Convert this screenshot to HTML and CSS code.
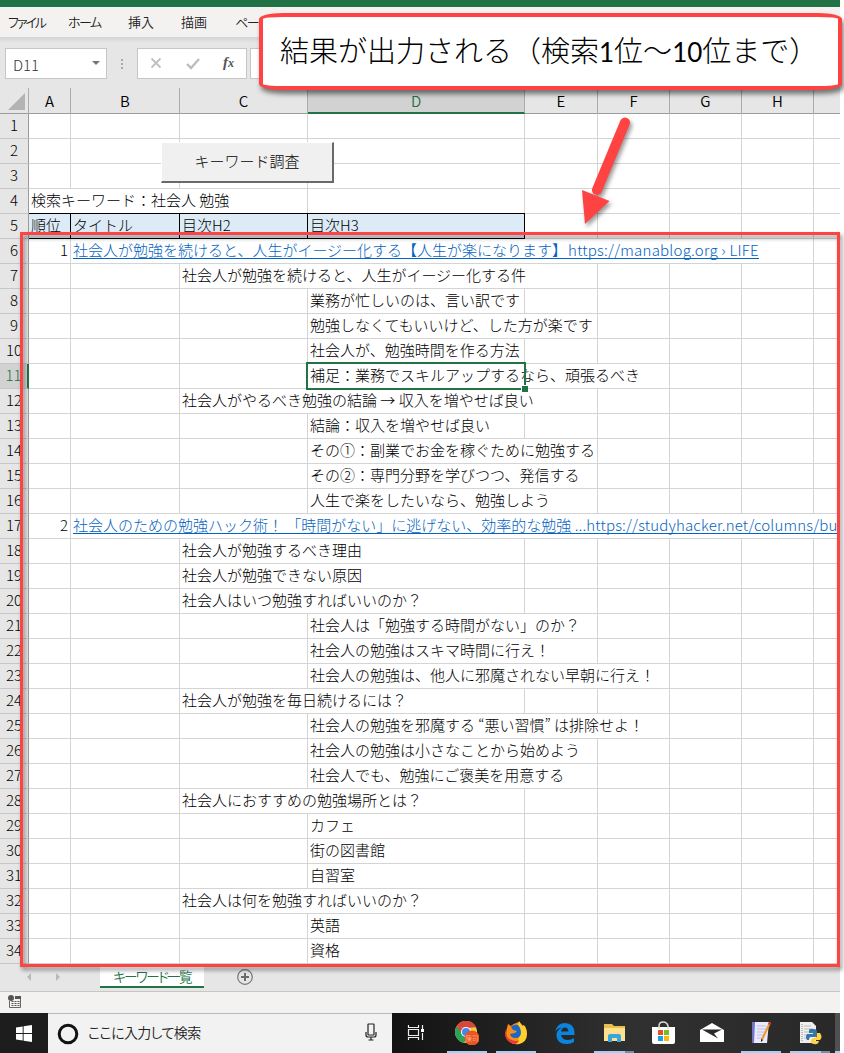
FILE: index.html
```html
<!DOCTYPE html>
<html lang="ja">
<head>
<meta charset="utf-8">
<title>キーワード一覧</title>
<link rel="stylesheet" href="styles.css">
</head>
<body>
<div class="window">
  <div class="titlebar"></div>
  <nav class="ribbon"><span class="kana file">ファイル</span><span class="kana home">ホーム</span><span class="insert">挿入</span><span class="draw">描画</span><span class="kana page">ページ</span></nav>
  <div class="formula">
    <div class="namebox"><span>D11</span><i class="caret"></i></div>
    <div class="dots"><i></i><i></i><i></i></div>
    <div class="fxbox">
      <svg class="fxicons" width="108" height="29" viewBox="0 0 108 29"><path d="M13.500 9.500l9 9M22.500 9.500l-9 9" stroke="#c0c0c0" stroke-width="1.800"/><path d="M49 15l4 4 8-9" fill="none" stroke="#bdbdbd" stroke-width="2.4"/></svg>
      <span class="fx">f<small>x</small></span>
    </div>
    <div class="input"></div>
  </div>
  <div class="cols"><span class="corner"><i></i></span><span>A</span><span>B</span><span>C</span><span class="on">D</span><span>E</span><span>F</span><span>G</span><span>H</span><span></span></div>
  <div class="sheet">
    <div class="row"><b>1</b></div>
    <div class="row"><b>2</b></div>
    <div class="row"><b>3</b></div>
    <div class="row"><b>4</b><span class="a to-c">検索キーワード：社会人 勉強</span></div>
    <div class="row head"><b>5</b><span class="a">順位</span><span class="bb">タイトル</span><span class="c">目次H2</span><span class="d">目次H3</span></div>
    <div class="row"><b>6</b><span class="a num">1</span><span class="bb to-h link"><u>社会人が勉強を続けると、人生がイージー化する【人生が楽になります】<span class="url1">https://manablog.org › LIFE</span></u></span></div>
    <div class="row"><b>7</b><span class="c to-e">社会人が勉強を続けると、人生がイージー化する件</span></div>
    <div class="row"><b>8</b><span class="d">業務が忙しいのは、言い訳です</span></div>
    <div class="row"><b>9</b><span class="d to-e">勉強しなくてもいいけど、した方が楽です</span></div>
    <div class="row"><b>10</b><span class="d">社会人が、勉強時間を作る方法</span></div>
    <div class="row"><b class="on">11</b><span class="d to-f">補足：業務でスキルアップするなら、頑張るべき</span><i class="cursor"></i></div>
    <div class="row"><b>12</b><span class="c to-e">社会人がやるべき勉強の結論 → 収入を増やせば良い</span></div>
    <div class="row"><b>13</b><span class="d">結論：収入を増やせば良い</span></div>
    <div class="row"><b>14</b><span class="d to-e">その①：副業でお金を稼ぐために勉強する</span></div>
    <div class="row"><b>15</b><span class="d to-e">その②：専門分野を学びつつ、発信する</span></div>
    <div class="row"><b>16</b><span class="d to-e">人生で楽をしたいなら、勉強しよう</span></div>
    <div class="row"><b>17</b><span class="a num">2</span><span class="bb to-i link"><u>社会人のための勉強ハック術！ 「時間がない」に逃げない、効率的な勉強 <span class="url2">...https://studyhacker.net/columns/bu</span></u></span></div>
    <div class="row"><b>18</b><span class="c to-d">社会人が勉強するべき理由</span></div>
    <div class="row"><b>19</b><span class="c to-d">社会人が勉強できない原因</span></div>
    <div class="row"><b>20</b><span class="c to-d">社会人はいつ勉強すればいいのか？</span></div>
    <div class="row"><b>21</b><span class="d to-e">社会人は「勉強する時間がない」のか？</span></div>
    <div class="row"><b>22</b><span class="d to-e">社会人の勉強はスキマ時間に行え！</span></div>
    <div class="row"><b>23</b><span class="d to-f">社会人の勉強は、他人に邪魔されない早朝に行え！</span></div>
    <div class="row"><b>24</b><span class="c to-d">社会人が勉強を毎日続けるには？</span></div>
    <div class="row"><b>25</b><span class="d to-f">社会人の勉強を邪魔する “悪い習慣” は排除せよ！</span></div>
    <div class="row"><b>26</b><span class="d to-e">社会人の勉強は小さなことから始めよう</span></div>
    <div class="row"><b>27</b><span class="d to-e">社会人でも、勉強にご褒美を用意する</span></div>
    <div class="row"><b>28</b><span class="c to-d">社会人におすすめの勉強場所とは？</span></div>
    <div class="row"><b>29</b><span class="d">カフェ</span></div>
    <div class="row"><b>30</b><span class="d">街の図書館</span></div>
    <div class="row"><b>31</b><span class="d">自習室</span></div>
    <div class="row"><b>32</b><span class="c to-d">社会人は何を勉強すればいいのか？</span></div>
    <div class="row"><b>33</b><span class="d">英語</span></div>
    <div class="row"><b>34</b><span class="d">資格</span></div>
    <button class="run">キーワード調査</button>
  </div>
  <div class="tabs">
    <svg width="100" height="27" viewBox="0 0 100 27"><path d="M31 9v8l-4-4zM56 9v8l4-4z" fill="#b9b9b9"/></svg>
    <span class="tab">キーワード一覧</span>
    <svg class="plus" width="18" height="18" viewBox="0 0 18 18"><circle cx="9" cy="9" r="7.3" fill="none" stroke="#777" stroke-width="1.2"/><path d="M9 5v8M5 9h8" stroke="#6c6c6c" stroke-width="2"/></svg>
  </div>
  <div class="status">
    <svg width="14" height="14" viewBox="0 0 14 14"><path d="M1.500 6v6.500h11V2" fill="none" stroke="#666"/><path d="M7 1h6v3H7z" fill="#555"/><circle cx="3" cy="3" r="3" fill="#555"/><path d="M3.500 6.500h8M3.500 8.500h8M3.500 10.500h8" stroke="#555" stroke-dasharray="2 1"/></svg>
  </div>
  <div class="taskbar">
    <div class="start"><svg width="16" height="17" viewBox="0 0 16 17"><path d="M0 2.4L6.7 1.4V8H0zM7.6 1.3L16 0v8H7.6zM0 9h6.7v6.6L0 14.6zM7.6 9H16v8l-8.4-1.2z" fill="#fff"/></svg></div>
    <div class="search">
      <svg width="22" height="22" viewBox="0 0 22 22"><circle cx="11" cy="11" r="8.8" fill="none" stroke="#111" stroke-width="3"/></svg>
      <span>ここに入力して検索</span>
      <svg class="mic" width="12" height="18" viewBox="0 0 12 18"><rect x="3" y="1" width="6" height="11" rx="0.500" fill="none" stroke="#222" stroke-width="1.2"/><path d="M1 9v3q0 2 2 2h6q2 0 2-2V9M6 14v3M3.500 17h5" fill="none" stroke="#222" stroke-width="1.2"/></svg>
    </div>
    <div class="apps">
      <div class="app view"><svg viewBox="0 0 24 24"><path d="M4.500 4v2.500h10V4M4.500 19v-2.500h10V19M4.500 8.500h10v6h-10zM18.500 4v4M18.500 12v7" fill="none" stroke="#eee" stroke-width="1.200"/><path d="M17 8h3v3h-3z" fill="#fff"/></svg></div>
      <div class="app open"><svg viewBox="0 0 24 24"><circle cx="11" cy="11" r="11" fill="#f6c945"/><path d="M11 11L1.500 5.500A11 11 0 0 0 9 21.800L15 13z" fill="#2aa35a"/><path d="M1.500 5.500A11 11 0 0 1 21 6.200L11 7z" fill="#d9463b"/><path d="M1.500 5.500L7 12l4-5z" fill="#d9463b"/><circle cx="11" cy="11" r="5" fill="#fff"/><circle cx="11" cy="11" r="4" fill="#4587ef"/><circle cx="17" cy="17" r="7.500" fill="#ec5420"/><text x="17" y="19.500" text-anchor="middle" font-size="6.500" fill="#ffd2bb">陳司</text></svg></div>
      <div class="app open"><svg viewBox="0 0 24 24"><path d="M3 7l1-4 3 2q2-2 5-3l3-1q3 2 4 4l2 0q3 6 1 11-3 7-9 7-8 0-10.500-7-1-5 .5-9z" fill="#ff8a18"/><path d="M15 0q2 3 3 5l2-1q3 4 3 9 0 8-8 10-5 1-9-2 7 1 9-4 2-4-1-9-1-4 1-8z" fill="#ffd02b"/><path d="M7 6q3-3 7-2 3 3 3 7 0 6-6 6-4 0-5-4l5-1 2-2-4-1z" fill="#1769c8"/><path d="M2 8q-1 9 6 11 4 2 7 0-1 4-5 4Q2 21 1 14q0-4 1-6z" fill="#ec3a35"/></svg></div>
      <div class="app"><svg viewBox="0 0 24 24"><path d="M2 11Q4 2 12 2q9 0 9.500 10v2H8q1 5 7 5 3 0 6-2v4q-3 2-7 2Q3 23 3.500 13 4 9 9 6.500 4 7 2 11zM8 10.500h7.500Q15 6.500 12 6.500T8 10.500z" fill="#0b84de"/></svg></div>
      <div class="app open split"><svg viewBox="0 0 24 24"><path d="M2 3h8l2 2h11v15H2z" fill="#e8bd52"/><path d="M2 7h21v13H2z" fill="#ffe08d"/><path d="M6 21v-6q0-2 2-2h9q2 0 2 2v6h-4v-4h-5v4z" fill="#36a6de"/></svg></div>
      <div class="app"><svg viewBox="0 0 24 24"><path d="M1 6h23v15q0 2-2 2H3q-2 0-2-2z" fill="#fff"/><path d="M8 8V5q0-4 4-4t5 4v3" fill="none" stroke="#ddd" stroke-width="1.500"/><path d="M7 9h5v5H7z" fill="#e94f25"/><path d="M13 9h5v5h-5z" fill="#7aba23"/><path d="M7 15h5v5H7z" fill="#14a2ea"/><path d="M13 15h5v5h-5z" fill="#fbb813"/></svg></div>
      <div class="app"><svg viewBox="0 0 24 24"><path d="M0 9l12-7 12 7v12H0z" fill="#fff"/><path d="M2 8.500h20l-8 4 4 5z" fill="#292929"/></svg></div>
      <div class="app open"><svg viewBox="0 0 24 24"><path d="M3 1h17l-2 21H4z" fill="#e9e9ff"/><path d="M3 1h3L5 22H3z" fill="#7475c9"/><path d="M8 5h9M8 8h9M8 11h8M8 14h7M8 17h6" stroke="#b5b6df" stroke-width=".8"/><path d="M20 1l2 1-8 17-2 2v-3z" fill="#ee9a31"/><path d="M20 1l2 1-1 2-2-1z" fill="#c33"/><path d="M12 18v3l2-2z" fill="#222"/></svg></div>
      <div class="app open split"><svg viewBox="0 0 24 24"><path d="M2 1h12l4 4v17H2z" fill="#efefef"/><path d="M4 3v18" stroke="#888" stroke-dasharray="1 1"/><path d="M6 5h7M6 8h9M6 11h5M6 14h4M6 17h4" stroke="#bbb"/><path d="M12 8h4q3 0 3 3v3q0 2-3 2h-3q-2 0-2 3H9q-2-3 0-6h6v-1h-4v-2q0-2 1-2z" fill="#3476aa"/><path d="M19 12h3q3 4 0 7h-5v1h4q-1 4-5 3-3 0-3-3 0-3 3-3 3 0 3-3z" fill="#ffd343"/></svg></div>
      <div class="app open edge"></div>
    </div>
  </div>
</div>
<div class="highlight"></div>
<svg class="arrow" width="70" height="120" viewBox="0 0 70 120"><path d="M50 10.500L22 78" stroke="#ff4343" stroke-width="10" stroke-linecap="round"/><path d="M7 78L34.500 89 10 112z" fill="#ff4343"/></svg>
<div class="callout">結果が出力される（検索<span>1</span>位～<span>10</span>位まで）</div>
</body>
</html>
```
FILE: styles.css
```css
* { box-sizing: border-box; }
body { margin: 0; width: 844px; height: 1053px; position: relative; overflow: hidden; background: #fff; font-family: "Noto Sans CJK JP", sans-serif; font-weight: 300; color: #000; text-spacing-trim: space-all; }
svg { display: block; flex: none; }
.window { width: 840px; height: 1053px; display: flex; flex-direction: column; background: #e6e6e6; }
.titlebar { height: 7px; background: #217346; }
.ribbon { height: 30px; background: #f3f2f1; display: flex; padding-left: 8px; font-size: 13px; line-height: 30px; color: #222; font-weight: 350; white-space: nowrap; }
.ribbon span { width: 60px; flex: none; }
.kana { font-feature-settings: "palt"; letter-spacing: -1.5px; }
.ribbon .file { letter-spacing: -2px; }
.ribbon .insert { width: 53px; }
.ribbon .draw { width: 54px; }
.formula { height: 51px; padding: 11px 0 9px 5px; display: flex; background: linear-gradient(#d4d4d4, #e6e6e6 6px); }
.namebox, .fxbox, .input { height: 31px; border: 1px solid #c6c6c6; background: #fff; }
.namebox { width: 102px; display: flex; align-items: center; justify-content: space-between; padding: 1px 6px 0 7px; font-size: 15px; color: #333; }
.caret { border: 4px solid transparent; border-top-color: #777; border-bottom: 0; margin-bottom: 2px; }
.dots { width: 30px; display: flex; flex-direction: column; align-items: center; justify-content: center; gap: 2px; }
.dots i { width: 2px; height: 2px; background: #aaa; }
.fxbox { width: 110px; position: relative; }
.fx { position: absolute; left: 85px; top: 2px; font: italic bold 15px/22px "Liberation Serif", serif; color: #555; }
.fx small { font-size: 12px; }
.input { flex: 1; margin-left: 3px; }
.cols, .row { display: grid; grid-template-columns: 29px 42px 109px 128px 217px 73px 72px 72px 72px 26px; }
.cols { height: 26px; border-bottom: 1px solid #9b9b9b; flex: none; }
.cols span { height: 26px; text-align: center; font-size: 15px; line-height: 25px; border-right: 1px solid #ababab; font-weight: 350; color: #000; }
.cols span:last-child { border: 0; }
.cols .on { background: #d2d2d2; color: #217346; border-bottom: 2px solid #217346; }
.corner { padding: 5px 3px 0 8px; }
.corner i { display: block; width: 17px; height: 17px; background: #b3b3b3; clip-path: polygon(100% 0, 100% 100%, 0 100%); }
.sheet { position: relative; height: 850px; flex: none; background:
  linear-gradient(#d4d4d4, #d4d4d4) 70px 0 / 1px 100% no-repeat,
  linear-gradient(#d4d4d4, #d4d4d4) 179px 0 / 1px 100% no-repeat,
  linear-gradient(#d4d4d4, #d4d4d4) 307px 0 / 1px 100% no-repeat,
  linear-gradient(#d4d4d4, #d4d4d4) 524px 0 / 1px 100% no-repeat,
  linear-gradient(#d4d4d4, #d4d4d4) 597px 0 / 1px 100% no-repeat,
  linear-gradient(#d4d4d4, #d4d4d4) 669px 0 / 1px 100% no-repeat,
  linear-gradient(#d4d4d4, #d4d4d4) 741px 0 / 1px 100% no-repeat,
  linear-gradient(#d4d4d4, #d4d4d4) 813px 0 / 1px 100% no-repeat,
  #fff; }
.row { height: 25px; border-bottom: 1px solid #d4d4d4; font-size: 15px; line-height: 21px; position: relative; white-space: nowrap; }
.row > b { grid-row: 1; grid-column: 1; height: 25px; border-right: 1px solid #9b9b9b; border-bottom: 1px solid #c6c6c6; background: #e6e6e6; font-weight: 300; text-align: center; line-height: 22px; }
.row > b.on { background: #d2d2d2; color: #217346; border-right: 2px solid #217346; }
.row > span { grid-row: 1; height: 24px; padding-left: 2px; margin-right: 1px; overflow: hidden; }
.row .a { grid-column-start: 2; }
.row .bb { grid-column-start: 3; }
.row .c { grid-column-start: 4; }
.row .d { grid-column-start: 5; }
.row .num { text-align: right; padding-right: 2px; }
.to-c { grid-column-end: 5; background: #fff; }
.to-d { grid-column-end: 6; background: #fff; }
.to-e { grid-column-end: 7; background: #fff; }
.to-f { grid-column-end: 8; background: #fff; }
.to-h { grid-column-end: 10; background: #fff; }
.to-i { grid-column-end: 11; background: #fff; }
.link { color: #0563c1; }
.row > .to-i { margin-right: 0; }
.link u { text-decoration: none; display: inline-block; height: 20px; line-height: 21px; border-bottom: 1px solid #0563c1; }
.url1 { letter-spacing: 0.22px; margin-left: 1px; }
.url2 { letter-spacing: 0.16px; }
.head > span { background: #ddebf7; height: 25px; border-right: 1px solid #000; border-bottom: 1px solid #000; box-shadow: 0 -1px #000; }
.row.head > span { margin: 0; height: 25px; }
.cursor { position: absolute; left: 306px; top: -2px; width: 220px; height: 28px; border: 2px solid #217346; z-index: 1; }
.cursor::after { content: ""; position: absolute; right: -4px; bottom: -4px; width: 6px; height: 6px; background: #217346; border: solid #fff; border-width: 1px 0 0 1px; }
.run { position: absolute; left: 161px; top: 28px; width: 173px; height: 41px; background: #f0f0f0; border: solid; border-width: 1px 2px 2px 1px; border-color: #fff #696969 #696969 #fff; padding: 0 0 4px; font: 300 15px "Noto Sans CJK JP", sans-serif; color: #000; }
.tabs { height: 28px; flex: none; display: flex; border-bottom: 1px solid #c6c6c6; }
.tab { width: 104px; height: 24px; border-bottom: 2px solid #217346; background: #fff; color: #217346; font-size: 13.5px; line-height: 24px; text-align: center; font-weight: 350; font-feature-settings: "palt"; letter-spacing: -1.6px; }
.plus { margin: 4px 0 0 32px; }
.status { height: 21px; flex: none; background: #f3f2f1; padding: 3px 0 0 8px; }
.taskbar { height: 40px; display: flex; background: linear-gradient(90deg, #111 45%, #303030 75%, #292929); }
.start { width: 48px; background: #1d1d1d; display: flex; align-items: center; justify-content: center; }
.search { width: 344px; background: #f2f2f2; border-top: 1px solid #bbb; display: flex; align-items: center; padding: 0 15px 0 9px; font-size: 14px; font-weight: 350; color: #222; }
.search span { margin: 0 0 3px 9px; font-feature-settings: "palt"; letter-spacing: -0.6px; }
.mic { margin-left: auto; margin-bottom: 3px; }
.apps { flex: 1; display: flex; gap: 9px; padding-left: 6px; overflow: hidden; }
.app { width: 40px; height: 40px; flex: none; padding: 8px; }
.app svg { width: 24px; height: 24px; }
.view { padding-left: 6px; }
.open { background: linear-gradient(#9fd0f8, #9fd0f8) 0 100% / 100% 2px no-repeat; }
.split { background: linear-gradient(90deg, #9fd0f8 31px, #6d91ad 31px) 0 100% / 100% 2px no-repeat; }
.edge { margin-left: -4px; background-color: #505050; }
.highlight { position: absolute; left: 20px; top: 232px; width: 820px; height: 735px; border: 3px solid #ff4343; filter: drop-shadow(2px 3px 2px rgba(0,0,0,.45)); }
.arrow { position: absolute; left: 575px; top: 112px; filter: drop-shadow(2px 3px 2px rgba(0,0,0,.4)); }
.callout { position: absolute; left: 259px; top: 13px; width: 583px; height: 77px; border: 4px solid #ff4343; border-radius: 24px / 6px; background: #fff; box-shadow: 2px 4px 5px rgba(0,0,0,.5); padding-left: 17px; font-size: 29px; line-height: 64px; white-space: nowrap; color: #000; }
.callout span { font-family: Lato, sans-serif; font-weight: 400; font-size: 26px; }
```
